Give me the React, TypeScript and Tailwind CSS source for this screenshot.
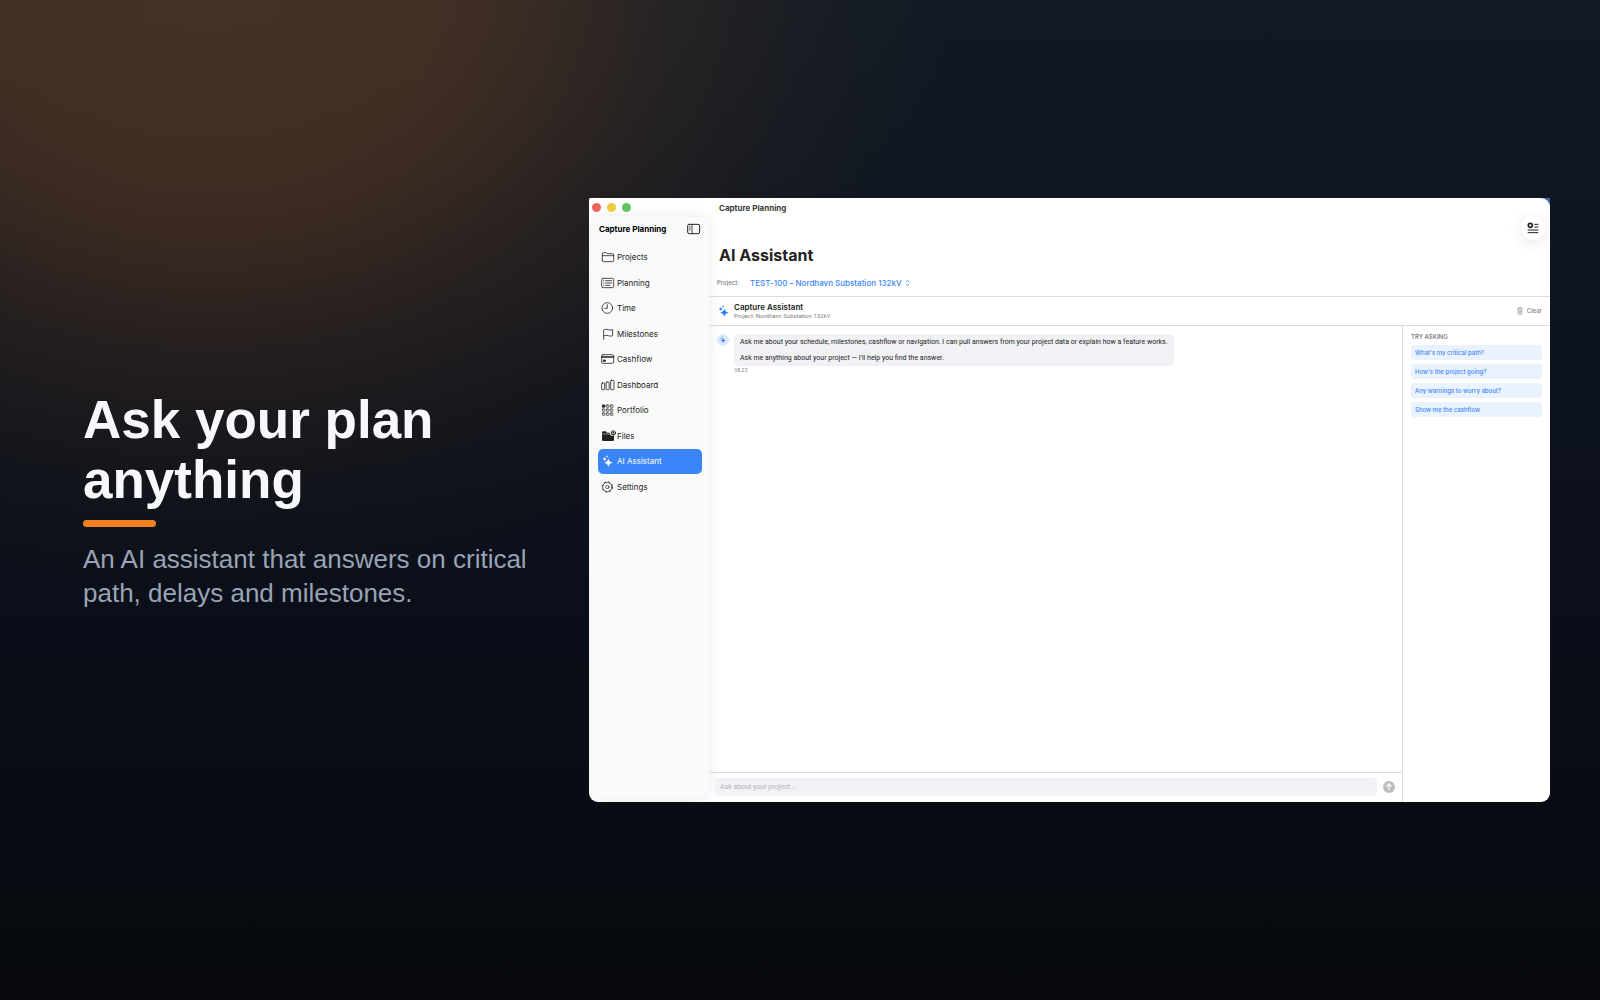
import type { ReactNode } from "react";

function Glyph({ children, className = "h-3 w-3.5" }: { children: ReactNode; className?: string }) {
  return (
    <svg
      viewBox="0 0 42 36"
      fill="none"
      stroke="currentColor"
      strokeWidth="2.4"
      strokeLinejoin="round"
      strokeLinecap="round"
      aria-hidden="true"
      className={`shrink-0 ${className}`}
    >
      {children}
    </svg>
  );
}

function Sparkles({ className }: { className?: string }) {
  return (
    <Glyph className={className}>
      <g fill="currentColor" stroke="none">
        <path d="M22 10 Q23.500 21.500 35 23 Q23.500 24.500 22 36 Q20.500 24.500 9 23 Q20.500 21.500 22 10Z" />
        <path d="M11 6 Q11.800 11.200 17 12 Q11.800 12.800 11 18 Q10.200 12.800 5 12 Q10.200 11.200 11 6Z" />
        <path d="M18 0 Q18.500 3.500 22 4 Q18.500 4.500 18 8 Q17.500 4.500 14 4 Q17.500 3.500 18 0Z" />
      </g>
    </Glyph>
  );
}

const gridCells = [7, 19, 31];

const navItems: { label: string; icon: ReactNode }[] = [
  {
    label: "Projects",
    icon: (
      <Glyph>
        <path d="M4 29V9q0-4 4-4h7q2 0 3 2l1 1h15q4 0 4 4v17q0 3-4 3H8q-4 0-4-3ZM4 14h34" />
      </Glyph>
    ),
  },
  {
    label: "Planning",
    icon: (
      <Glyph>
        <rect x="2" y="4" width="36" height="28" rx="4" />
        <path d="M8 11h1M8 18h1M8 25h1M14 11h18M14 18h18M14 25h12" />
      </Glyph>
    ),
  },
  {
    label: "Time",
    icon: (
      <Glyph>
        <circle cx="19" cy="18" r="16" />
        <path d="M19 8v11h-8" />
      </Glyph>
    ),
  },
  {
    label: "Milestones",
    icon: (
      <Glyph>
        <path d="M8 34V6q8-4 14-1t13 0v18q-6 3-13 0t-14 1" />
      </Glyph>
    ),
  },
  {
    label: "Cashflow",
    icon: (
      <Glyph>
        <rect x="2" y="5" width="36" height="26" rx="4" />
        <path d="M2 12h36" strokeWidth="4" />
        <rect x="8" y="21" width="5" height="4" fill="currentColor" />
      </Glyph>
    ),
  },
  {
    label: "Dashboard",
    icon: (
      <Glyph>
        <rect x="2" y="12" width="9" height="20" rx="2" />
        <rect x="15.500" y="9" width="9" height="23" rx="2" />
        <rect x="29" y="4" width="10" height="28" rx="2" />
      </Glyph>
    ),
  },
  {
    label: "Portfolio",
    icon: (
      <Glyph>
        {gridCells.map((y) =>
          gridCells.map((x) => (
            <rect
              key={`${x}-${y}`}
              x={x - 3}
              y={y - 4}
              width="8"
              height="7"
              rx="2"
              strokeWidth="2.2"
              fill={x === 7 && y === 7 ? "currentColor" : "none"}
            />
          )),
        )}
      </Glyph>
    ),
  },
  {
    label: "Files",
    icon: (
      <Glyph className="h-3 w-3.5 overflow-visible">
        <path
          d="M3 29V8q0-4 4-4h7l4 4h8q0 9 9 10h4v11q0 4-4 4H7q-4 0-4-4Z"
          fill="currentColor"
          stroke="none"
        />
        <path d="M4 12h22" stroke="#fafafa" strokeWidth="1.500" />
        <circle cx="37" cy="9" r="6.500" strokeWidth="3" />
        <circle cx="37" cy="8" r="2.500" fill="currentColor" stroke="none" />
        <path d="M34 13h6" strokeWidth="2" />
      </Glyph>
    ),
  },
  { label: "AI Assistant", icon: <Sparkles className="h-3 w-3.5" /> },
  {
    label: "Settings",
    icon: (
      <Glyph>
        <circle cx="19" cy="18" r="14" strokeWidth="2.2" />
        <circle cx="19" cy="18" r="15.500" strokeWidth="2.500" strokeDasharray="6 6.170" strokeLinecap="butt" />
        <circle cx="19" cy="18" r="5" strokeWidth="2" />
      </Glyph>
    ),
  },
];

const prompts = [
  "What's my critical path?",
  "How's the project going?",
  "Any warnings to worry about?",
  "Show me the cashflow",
];

function Sidebar() {
  return (
    <aside className="mt-[19px] mb-1 ml-0.5 flex w-[118px] shrink-0 flex-col rounded-[10px] bg-[#fafafa] px-[7px] shadow-[0_0_14px_rgba(0,0,0,0.09)]">
      <div className="flex h-6 items-center justify-between pr-px pl-px">
        <span className="text-[8px] font-bold text-black">Capture Planning</span>
        <button type="button" aria-label="Toggle sidebar" className="text-[#222]">
          <Glyph className="h-3 w-3.5">
            <rect x="2" y="4" width="36" height="28" rx="5" strokeWidth="3" />
            <path d="M15 4v28" />
            <path d="M7 11h3M7 16h3M7 21h3" strokeWidth="2" />
          </Glyph>
        </button>
      </div>
      <nav className="mt-1 grid h-[255px] grid-rows-10">
        {navItems.map((item) => {
          const active = item.label === "AI Assistant";
          return (
            <a
              key={item.label}
              href="#"
              aria-current={active ? "page" : undefined}
              className={`flex items-center gap-0.5 rounded-[5px] pl-[3px] text-[8px] ${
                active ? "bg-[#3a86f8] text-white" : "text-[#222]"
              }`}
            >
              {item.icon}
              {item.label}
            </a>
          );
        })}
      </nav>
    </aside>
  );
}

function AppWindow() {
  return (
    <div className="aspect-[961/604] min-w-0 flex-1 rounded-b-[9px] bg-linear-to-b from-[#3f6ba8] from-5% to-transparent to-10%">
      <div className="relative flex h-full overflow-hidden rounded-[9px] rounded-tl-[2px] bg-white font-['Inter',sans-serif] text-[#222]">
        <div className="absolute top-[5px] left-[3px] flex gap-1.5">
          <span className="size-[9px] rounded-full bg-[#ed6560]" />
          <span className="size-[9px] rounded-full bg-[#f2c83e]" />
          <span className="size-[9px] rounded-full bg-[#60c465]" />
        </div>
        <Sidebar />
        <main className="flex min-w-0 flex-1 flex-col">
          <header className="flex h-[99px] justify-between border-b border-[#dcdcdc] pr-[5px]">
            <div className="flex flex-col">
              <p className="mt-1 pl-[10px] text-[8px] leading-3 font-bold text-[#3a3a3a]">Capture Planning</p>
              <h1 className="mt-[31px] pl-[10px] text-[16px] leading-5 font-bold">AI Assistant</h1>
              <div className="mt-3 flex items-center gap-[11px] pl-2 leading-3">
                <span className="text-[6px] font-medium text-[#808080]">Project:</span>
                <button type="button" className="flex items-center gap-[3px] text-[8px] font-medium text-[#3a86f8]">
                  TEST-100 – Nordhavn Substation 132kV
                  <svg viewBox="0 0 15 18" fill="none" stroke="currentColor" strokeWidth="2.400" className="h-1.5 w-[5px]" aria-hidden="true">
                    <path d="M2 6l5.500-5 5.500 5M2 12l5.500 5 5.500-5" />
                  </svg>
                </button>
              </div>
            </div>
            <button
              type="button"
              aria-label="Outline"
              className="mt-[18px] grid size-6 place-items-center rounded-full bg-white text-[#222] shadow-[0_3px_14px_rgba(0,0,0,0.1)]"
            >
              <Glyph className="h-3 w-3.5">
                <circle cx="13" cy="10" r="6" strokeWidth="5" />
                <path d="M25 7h12M25 15h12M5 24h32M5 32h32" strokeWidth="3" strokeLinecap="butt" />
              </Glyph>
            </button>
          </header>
          <div className="flex h-[29px] items-center border-b border-[#dcdcdc] pr-2 pl-2">
            <Sparkles className="h-3 w-3.5 text-[#2f7ff7]" />
            <div className="ml-[3px] flex flex-col">
              <h2 className="text-[8px] leading-[10px] font-semibold">Capture Assistant</h2>
              <p className="font-['Roboto',sans-serif] text-[6px] leading-2 text-[#808080]">
                Project: Nordhavn Substation 132kV
              </p>
            </div>
            <button type="button" className="ml-auto flex items-center gap-1 text-[6px] font-medium text-[#808080]">
              <svg viewBox="0 0 18 24" fill="none" stroke="currentColor" strokeWidth="1.800" className="h-2 w-1.5" aria-hidden="true">
                <path d="M1 5h16M6 5V2h6v3M3 5l1 17h10l1-17M7 9v9M11 9v9" />
              </svg>
              Clear
            </button>
          </div>
          <div className="flex min-h-0 flex-1">
            <section className="flex min-w-0 flex-1 flex-col">
              <div className="flex flex-1 items-start gap-[5px] pt-2 pl-2">
                <span className="grid size-3 place-items-center rounded-full bg-[#dbe9fe] text-[#2f7ff7]">
                  <Sparkles className="h-[7px] w-2" />
                </span>
                <div>
                  <div className="rounded-[4px] bg-[#f2f1f6] px-1.5 py-1 font-['Roboto',sans-serif] text-[7px] leading-2">
                    <p>
                      Ask me about your schedule, milestones, cashflow or navigation. I can pull answers from your project
                      data or explain how a feature works.
                    </p>
                    <p className="mt-2">Ask me anything about your project — I'll help you find the answer.</p>
                  </div>
                  <time className="block text-[5px] leading-2 text-[#8a8a8a]">08.22</time>
                </div>
              </div>
              <form className="flex h-[30px] items-center gap-1.5 border-t border-[#dcdcdc] pr-[7px] pl-1.5">
                <input
                  type="text"
                  aria-label="Ask about your project"
                  placeholder="Ask about your project..."
                  className="h-[18px] min-w-0 flex-1 rounded-[4px] bg-[#f2f1f6] px-[5px] font-['Roboto',sans-serif] text-[7px] placeholder:text-[#b4b4b8]"
                />
                <button
                  type="button"
                  aria-label="Send"
                  className="grid size-3 place-items-center rounded-full bg-[#bdbdbd] text-white"
                >
                  <svg viewBox="0 0 18 18" fill="none" stroke="currentColor" strokeWidth="2.500" className="size-2" aria-hidden="true">
                    <path d="M9 17V2M3 8l6-6 6 6" />
                  </svg>
                </button>
              </form>
            </section>
            <aside className="flex w-[148px] shrink-0 flex-col gap-1 border-l border-[#dcdcdc] px-2 pt-[7px]">
              <h3 className="text-[6px] leading-2 font-semibold text-[#808080]">TRY ASKING</h3>
              {prompts.map((prompt) => (
                <button
                  key={prompt}
                  type="button"
                  className="h-[15px] rounded-[3px] bg-[#eaf2fe] px-1 text-left text-[6px] font-medium text-[#3a86f8]"
                >
                  {prompt}
                </button>
              ))}
            </aside>
          </div>
        </main>
      </div>
    </div>
  );
}

export default function App() {
  return (
    <div className="flex min-h-screen items-center bg-[radial-gradient(ellipse_740px_590px_at_210px_0px,rgba(240,125,40,0.23)_0%,rgba(240,125,40,0.22)_30%,rgba(240,125,40,0.17)_45%,rgba(240,125,40,0.1)_60%,rgba(240,125,40,0.04)_80%,transparent_100%),linear-gradient(to_bottom,#111a24_0%,#0a0e18_65%,#07090d_100%)] pr-[50px] pb-px">
      <section className="w-[589px] shrink-0 pl-[83px] font-['Liberation_Sans',sans-serif]">
        <h1 className="text-[53px] leading-[60px] font-bold text-[#f7f8fc]">
          Ask your plan
          <br />
          anything
        </h1>
        <div className="mt-2.5 h-[7px] w-[73px] rounded-full bg-[#f08020]" />
        <p className="mt-[15px] text-[26px] leading-[34px] text-[#9aa3b5]">
          An AI assistant that answers on critical
          <br />
          path, delays and milestones.
        </p>
      </section>
      <AppWindow />
    </div>
  );
}
